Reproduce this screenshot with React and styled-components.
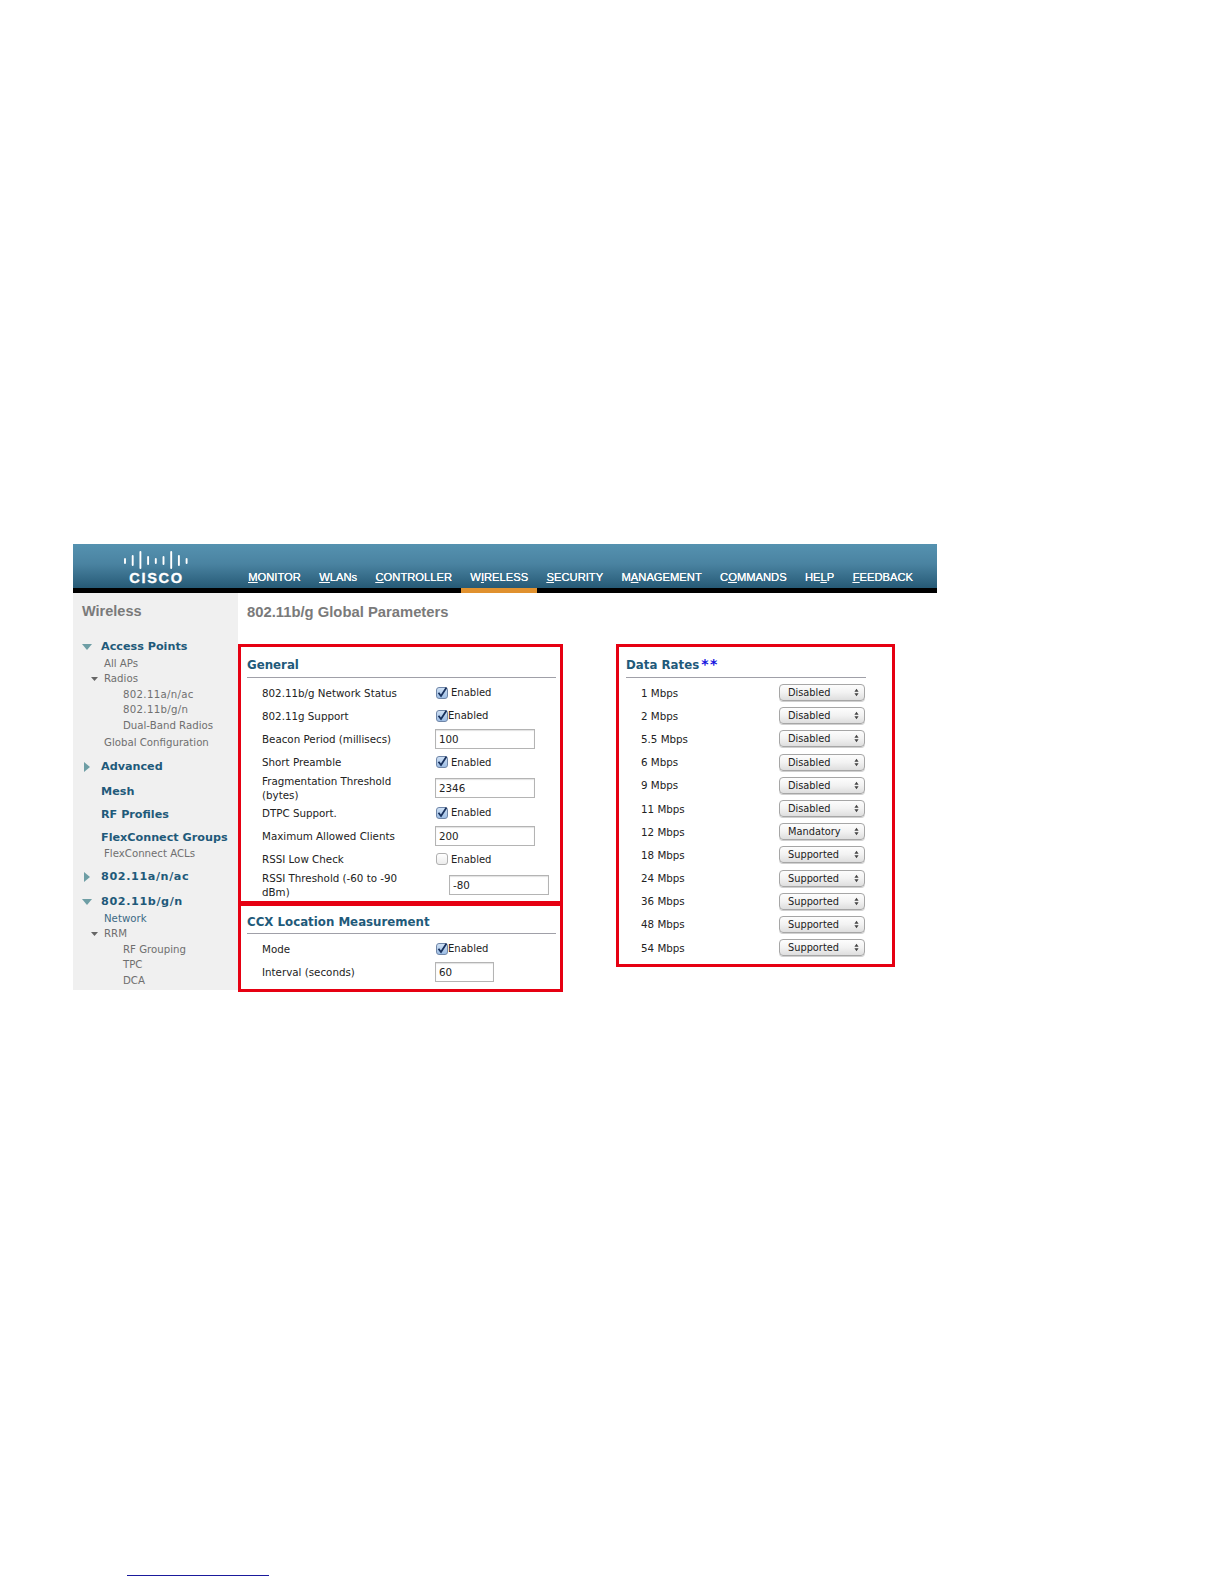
import React from "react";
import styled, { createGlobalStyle } from "styled-components";

const Global = createGlobalStyle`
  html, body { margin: 0; padding: 0; background: #fff; }
  body { font-family: "DejaVu Sans", Verdana, sans-serif; }
`;

const Page = styled.div`
  width: 1224px;
  height: 1584px;
  box-sizing: border-box;
  padding: 544px 0 0 73px;
  overflow: hidden;
  display: flex;
  flex-direction: column;
`;
const Console = styled.div`
  width: 864px;
`;
const Header = styled.header`
  height: 44px;
  display: flex;
  align-items: flex-end;
  background: linear-gradient(#5592b0, #4a83a1 45%, #265a76);
  border-bottom: 5px solid #000;
`;
const LogoBox = styled.div`
  width: 165px;
  flex: none;
  display: flex;
  flex-direction: column;
  align-items: center;
  padding: 0 0 4px 0;
`;
const LogoWord = styled.div`
  font-family: "Liberation Sans", Arial, sans-serif;
  font-weight: 700;
  font-size: 14.6px;
  line-height: 12px;
  letter-spacing: 1.7px;
  color: #fff;
  margin-top: 3px;
  padding-left: 2px;
  -webkit-text-stroke: 0.3px #fff;
`;
const Nav = styled.nav`
  display: flex;
  height: 44px;
  align-items: flex-end;
  padding-left: 1px;
`;
const NavItem = styled.a`
  display: block;
  font-family: "Liberation Sans", Arial, sans-serif;
  font-size: 11.2px;
  line-height: 14px;
  padding: 0 9.2px 4px;
  color: #fff;
  position: relative;
  white-space: nowrap;
  text-shadow: 0 0 0.5px #fff;
  u { text-underline-offset: 1px; }
  ${(p) =>
    p.$active &&
    `&::after { content: ""; position: absolute; left: 0; right: 0; bottom: -5px; height: 5px; background: #e0912f; }`}
`;
const Body = styled.div`
  display: flex;
  align-items: flex-start;
`;
const Side = styled.aside`
  width: 165px;
  height: 397px;
  flex: none;
  background: #f0f0f0;
  box-sizing: border-box;
  padding: 9px 0 0 9px;
`;
const SideTitle = styled.div`
  font-family: "Liberation Sans", Arial, sans-serif;
  font-weight: 700;
  font-size: 14.5px;
  line-height: 18px;
  color: #7a7a7a;
  height: 37px;
`;
const SideItem = styled.div`
  position: relative;
  height: 16px;
  line-height: 16px;
  margin-top: ${(p) => p.$gap}px;
  padding-left: ${(p) => [19, 22, 41][p.$level]}px;
  font-size: ${(p) => (p.$level === 0 ? 11.2 : 10.2)}px;
  font-weight: ${(p) => (p.$level === 0 ? 700 : 400)};
  letter-spacing: ${(p) => p.$spacing || 0}px;
  color: ${(p) => (p.$level === 0 ? "#1f5a7a" : p.$accent ? "#3d6a85" : "#6f6f6f")};
  white-space: nowrap;
`;
const Arrow = styled.svg`
  position: absolute;
  left: ${(p) => p.$x}px;
  top: 50%;
  transform: translateY(-50%);
`;
const Main = styled.main`
  flex: 1;
  min-width: 0;
`;
const Title = styled.h1`
  margin: 0;
  height: 51px;
  box-sizing: border-box;
  padding: 10px 0 0 9px;
  font-family: "Liberation Sans", Arial, sans-serif;
  font-weight: 700;
  font-size: 14.8px;
  line-height: 18px;
  color: #7a7a7a;
`;
const Columns = styled.div`
  display: flex;
  gap: 53px;
  align-items: flex-start;
`;
const Stack = styled.div`
  width: 325px;
  display: flex;
  flex-direction: column;
`;
const RedBox = styled.section`
  box-sizing: border-box;
  border: 3px solid #e60012;
  width: ${(p) => p.$w}px;
  height: ${(p) => p.$h}px;
  padding: ${(p) => p.$pt}px 6px 0 ${(p) => p.$pl || 6}px;
  margin-top: ${(p) => p.$mt || 0}px;
`;
const SectionHead = styled.h2`
  margin: 0 0 3px;
  height: 27px;
  box-sizing: border-box;
  font-size: 11.8px;
  font-weight: 700;
  line-height: 18px;
  color: #1f5a7a;
  border-bottom: 1px solid #a0a0a8;
  width: ${(p) => p.$w}px;
  padding-top: ${(p) => p.$pad}px;
  white-space: nowrap;
  span { color: #1212e0; font-size: 14px; letter-spacing: 1.5px; margin-left: 2px; }
`;
const Row = styled.div`
  box-sizing: border-box;
  display: grid;
  grid-template-columns: ${(p) => p.$label}px 1fr;
  align-items: center;
  height: ${(p) => p.$h || 23.2}px;
  padding: 0 0 ${(p) => p.$lift || 0}px 15px;
  font-size: 10.3px;
  color: #222;
`;
const Label = styled.div`
  line-height: 14px;
`;
const Control = styled.div`
  display: flex;
  align-items: center;
  font-size: 10px;
  padding-left: ${(p) => p.$pl || 0}px;
`;
const Check = styled.span`
  box-sizing: border-box;
  display: flex;
  align-items: center;
  justify-content: center;
  width: 12px;
  height: 12px;
  flex: none;
  border-radius: 3px;
  border: 1px solid ${(p) => (p.$on ? "#6f86a8" : "#b0b0b0")};
  background: ${(p) =>
    p.$on ? "linear-gradient(#cfe0f4, #9dbde4)" : "linear-gradient(#fff, #ececec)"};
  margin-right: ${(p) => (p.$tight ? 0 : 3)}px;
  margin-left: 1px;
`;
const Field = styled.input`
  box-sizing: border-box;
  width: ${(p) => p.$w}px;
  height: 20px;
  border: 1px solid #b4b4b4;
  box-shadow: inset 0 1px 1px #e2e2e2;
  padding: 0 3px;
  font: 10.3px "DejaVu Sans", Verdana, sans-serif;
  color: #222;
  outline: none;
  background: #fff;
`;
const Select = styled.div`
  box-sizing: border-box;
  width: 86px;
  height: 17px;
  display: flex;
  align-items: center;
  justify-content: space-between;
  padding: 0 5px 0 8px;
  border: 1px solid #a6a6a6;
  border-radius: 4px;
  background: linear-gradient(#fdfdfd, #f2f2f2 50%, #dedede);
  box-shadow: 0 1px 0 #d0d0d0;
  font-size: 9.8px;
  color: #222;
`;
const BottomRule = styled.div`
  width: 142px;
  height: 1px;
  background: #1a1a9c;
  margin: auto 0 8px 54px;
`;

const Bars = () => (
  <svg width="64" height="18" viewBox="0 0 64 18">
    {[
      [1, 8, 12],
      [8.7, 5, 14],
      [16.4, 1, 17],
      [24.1, 6, 13],
      [31.8, 8, 12],
      [39.5, 6, 13],
      [47.2, 1, 17],
      [54.9, 5, 14],
      [62.6, 8, 12],
    ].map(([x, y1, y2], i) => (
      <line key={i} x1={x} x2={x} y1={y1} y2={y2} stroke="#fff" strokeWidth="1.9" strokeLinecap="round" />
    ))}
  </svg>
);

const Tri = ({ dir, big, x }) => {
  const s = big ? 10 : 7;
  return (
    <Arrow $x={x} width={s} height={s} viewBox="0 0 10 10">
      {dir === "down" ? (
        <path d="M0 2 H10 L5 8 Z" fill={big ? "#6e9ea5" : "#666"} />
      ) : (
        <path d="M2 0 L8 5 L2 10 Z" fill="#6e9ea5" />
      )}
    </Arrow>
  );
};

const Tick = () => (
  <svg width="12" height="12" viewBox="0 0 12 12" style={{ overflow: "visible" }}>
    <path d="M2.5 5.8 L5 9 L10.5 0.5" fill="none" stroke="#17305c" strokeWidth="1.8" />
  </svg>
);

const UpDown = () => (
  <svg width="5" height="9" viewBox="0 0 6 10">
    <path d="M3 0.5 L5.5 4 H0.5 Z M3 9.5 L5.5 6 H0.5 Z" fill="#444" />
  </svg>
);

const navItems = [
  ["", "M", "ONITOR"],
  ["", "W", "LANs"],
  ["", "C", "ONTROLLER"],
  ["W", "I", "RELESS", true],
  ["", "S", "ECURITY"],
  ["M", "A", "NAGEMENT"],
  ["C", "O", "MMANDS"],
  ["HE", "L", "P"],
  ["", "F", "EEDBACK"],
];

const sideItems = [
  { t: "Access Points", l: 0, g: 0, a: "down" },
  { t: "All APs", l: 1, g: 1 },
  { t: "Radios", l: 1, g: -1, s: true },
  { t: "802.11a/n/ac", l: 2, g: 0, sp: 0.3 },
  { t: "802.11b/g/n", l: 2, g: -1, sp: 0.3 },
  { t: "Dual-Band Radios", l: 2, g: 0 },
  { t: "Global Configuration", l: 1, g: 1 },
  { t: "Advanced", l: 0, g: 8, a: "right" },
  { t: "Mesh", l: 0, g: 9 },
  { t: "RF Profiles", l: 0, g: 7 },
  { t: "FlexConnect Groups", l: 0, g: 7 },
  { t: "FlexConnect ACLs", l: 1, g: 0 },
  { t: "802.11a/n/ac", l: 0, g: 7, a: "right", sp: 0.6 },
  { t: "802.11b/g/n", l: 0, g: 9, a: "down", sp: 0.6 },
  { t: "Network", l: 1, g: 1, accent: true },
  { t: "RRM", l: 1, g: -1, s: true },
  { t: "RF Grouping", l: 2, g: 0 },
  { t: "TPC", l: 2, g: -1 },
  { t: "DCA", l: 2, g: 0 },
];

const rates = [
  ["1 Mbps", "Disabled"],
  ["2 Mbps", "Disabled"],
  ["5.5 Mbps", "Disabled"],
  ["6 Mbps", "Disabled"],
  ["9 Mbps", "Disabled"],
  ["11 Mbps", "Disabled"],
  ["12 Mbps", "Mandatory"],
  ["18 Mbps", "Supported"],
  ["24 Mbps", "Supported"],
  ["36 Mbps", "Supported"],
  ["48 Mbps", "Supported"],
  ["54 Mbps", "Supported"],
];

const CheckField = ({ on = true, tight }) => (
  <Control>
    <Check $on={on} $tight={tight}>{on && <Tick />}</Check>
    Enabled
  </Control>
);

const InputField = ({ value, w = 100, pl }) => (
  <Control $pl={pl}>
    <Field $w={w} defaultValue={value} readOnly />
  </Control>
);

export default function App() {
  return (
    <Page>
      <Global />
      <Console>
        <Header>
          <LogoBox>
            <Bars />
            <LogoWord>CISCO</LogoWord>
          </LogoBox>
          <Nav>
            {navItems.map(([a, b, c, active]) => (
              <NavItem key={a + b + c} $active={active}>
                {a}
                <u>{b}</u>
                {c}
              </NavItem>
            ))}
          </Nav>
        </Header>
        <Body>
          <Side>
            <SideTitle>Wireless</SideTitle>
            {sideItems.map((it, i) => (
              <SideItem key={i} $level={it.l} $gap={it.g} $accent={it.accent} $spacing={it.sp}>
                {it.a && <Tri dir={it.a} big x={0} />}
                {it.s && <Tri dir="down" x={9} />}
                {it.t}
              </SideItem>
            ))}
          </Side>
          <Main>
            <Title>802.11b/g Global Parameters</Title>
            <Columns>
              <Stack>
                <RedBox $w={325} $h={260} $pt={4}>
                  <SectionHead $w={309} $pad={5}>General</SectionHead>
                  <Row $label={173}><Label>802.11b/g Network Status</Label><CheckField /></Row>
                  <Row $label={173}><Label>802.11g Support</Label><CheckField tight /></Row>
                  <Row $label={173}><Label>Beacon Period (millisecs)</Label><InputField value="100" /></Row>
                  <Row $label={173}><Label>Short Preamble</Label><CheckField /></Row>
                  <Row $label={173} $h={27.5} $lift={2}><Label>Fragmentation Threshold<br />(bytes)</Label><InputField value="2346" /></Row>
                  <Row $label={173}><Label>DTPC Support.</Label><CheckField /></Row>
                  <Row $label={173}><Label>Maximum Allowed Clients</Label><InputField value="200" /></Row>
                  <Row $label={173}><Label>RSSI Low Check</Label><CheckField on={false} /></Row>
                  <Row $label={173} $h={29} $lift={2}><Label>RSSI Threshold (-60 to -90<br />dBm)</Label><InputField value="-80" pl={14} /></Row>
                </RedBox>
                <RedBox $w={325} $h={89} $pt={1} $mt={-1}>
                  <SectionHead $w={309} $pad={6}>CCX Location Measurement</SectionHead>
                  <Row $label={173}><Label>Mode</Label><CheckField tight /></Row>
                  <Row $label={173}><Label>Interval (seconds)</Label><InputField value="60" w={59} /></Row>
                </RedBox>
              </Stack>
              <RedBox $w={279} $h={323} $pt={4} $pl={7}>
                <SectionHead $w={240} $pad={4}>Data Rates<span>**</span></SectionHead>
                {rates.map(([name, value]) => (
                  <Row key={name} $label={138}>
                    <Label>{name}</Label>
                    <Control>
                      <Select>
                        {value}
                        <UpDown />
                      </Select>
                    </Control>
                  </Row>
                ))}
              </RedBox>
            </Columns>
          </Main>
        </Body>
      </Console>
      <BottomRule />
    </Page>
  );
}
